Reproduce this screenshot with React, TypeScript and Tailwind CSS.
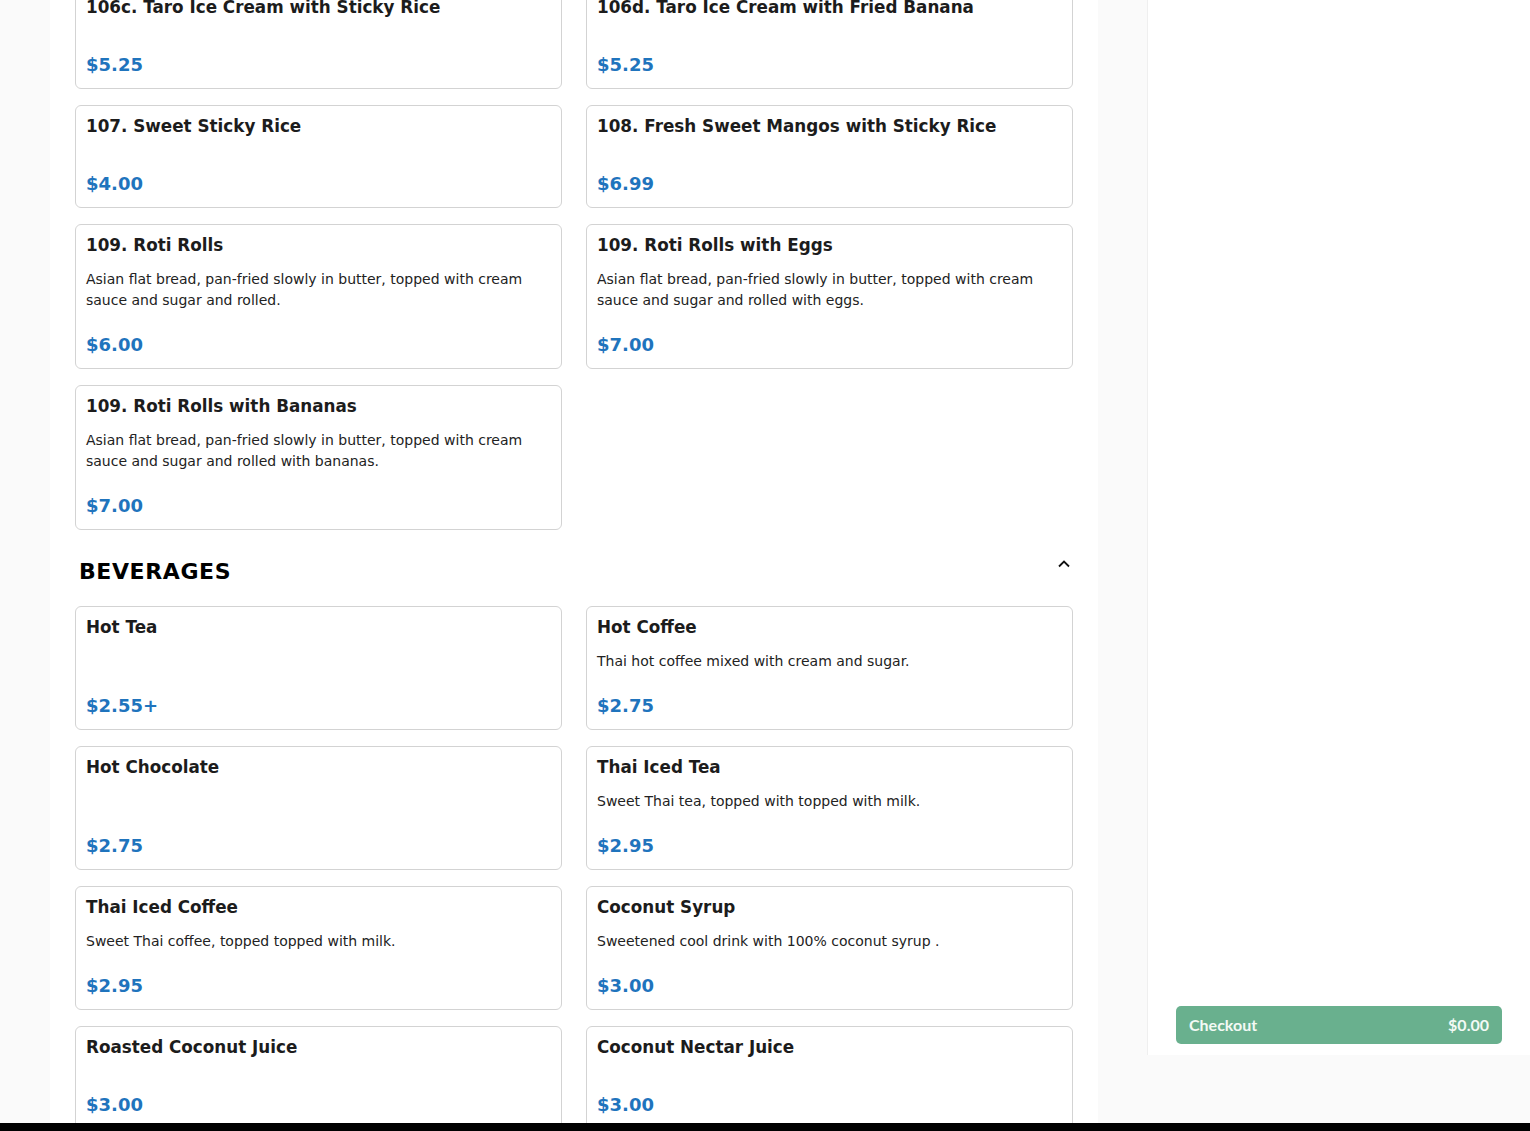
import React from "react";

type Item = { name: string; desc?: string; price: string };

const desserts: Item[] = [
  { name: "106c. Taro Ice Cream with Sticky Rice", price: "$5.25" },
  { name: "106d. Taro Ice Cream with Fried Banana", price: "$5.25" },
  { name: "107. Sweet Sticky Rice", price: "$4.00" },
  { name: "108. Fresh Sweet Mangos with Sticky Rice", price: "$6.99" },
  {
    name: "109. Roti Rolls",
    desc: "Asian flat bread, pan-fried slowly in butter, topped with cream sauce and sugar and rolled.",
    price: "$6.00",
  },
  {
    name: "109. Roti Rolls with Eggs",
    desc: "Asian flat bread, pan-fried slowly in butter, topped with cream sauce and sugar and rolled with eggs.",
    price: "$7.00",
  },
  {
    name: "109. Roti Rolls with Bananas",
    desc: "Asian flat bread, pan-fried slowly in butter, topped with cream sauce and sugar and rolled with bananas.",
    price: "$7.00",
  },
];

const beverages: Item[] = [
  { name: "Hot Tea", price: "$2.55+" },
  { name: "Hot Coffee", desc: "Thai hot coffee mixed with cream and sugar.", price: "$2.75" },
  { name: "Hot Chocolate", price: "$2.75" },
  { name: "Thai Iced Tea", desc: "Sweet Thai tea, topped with topped with milk.", price: "$2.95" },
  { name: "Thai Iced Coffee", desc: "Sweet Thai coffee, topped topped with milk.", price: "$2.95" },
  { name: "Coconut Syrup", desc: "Sweetened cool drink with 100% coconut syrup .", price: "$3.00" },
  { name: "Roasted Coconut Juice", price: "$3.00" },
  { name: "Coconut Nectar Juice", price: "$3.00" },
];

function MenuCard({ item }: { item: Item }) {
  return (
    <div className="flex flex-col rounded-[6px] border border-[#d3d3d3] bg-white px-[10px] pt-[10px] pb-[13px]">
      <div className="mb-[13px] text-[16.8px] font-bold leading-[21px] text-[#1c1c1c]">{item.name}</div>
      <div className="mb-[23px] text-[14px] leading-[21px] text-[#222222]">{item.desc}</div>
      <div className="mt-auto text-[18px] font-bold leading-[21px] text-[#1f74bd]">{item.price}</div>
    </div>
  );
}

function Grid({ items }: { items: Item[] }) {
  return (
    <div className="grid grid-cols-2 gap-x-[24px] gap-y-[16px]">
      {items.map((it) => (
        <MenuCard key={it.name} item={it} />
      ))}
    </div>
  );
}

export default function App() {
  return (
    <div
      className="flex h-[1131px] w-[1530px] flex-col overflow-hidden bg-[#fafafa]"
      style={{ fontFamily: '"DejaVu Sans", sans-serif' }}
    >
      <div className="flex h-[1123px] overflow-hidden">
        {/* menu column */}
        <main className="ml-[50px] w-[1048px] shrink-0 bg-white px-[25px]">
          <div className="mt-[-14px]">
            <Grid items={desserts} />
            <div className="flex items-start justify-between pl-[4px] pr-[2px] pt-[27px] pb-[19px]">
              <h2 className="text-[22px] font-bold leading-[30px] tracking-[0.6px] text-black">BEVERAGES</h2>
              <svg width="14" height="10" viewBox="0 0 14 10" className="mt-[2px]">
                <polyline points="2,7.5 7,2.5 12,7.5" fill="none" stroke="#111" strokeWidth="1.8" />
              </svg>
            </div>
            <Grid items={beverages} />
          </div>
        </main>

        {/* order panel */}
        <aside className="ml-[49px] flex h-[1055px] w-[383px] shrink-0 flex-col justify-end border-l border-[#efefef] bg-white pb-[11px] pl-[28px] pr-[28px]">
          <button
            className="flex h-[38px] items-center justify-between rounded-[5px] bg-[#69b08e] px-[13px] text-[16px] font-bold text-[#f3faf5]"
            style={{ fontFamily: 'Lato, sans-serif' }}
          >
            <span>Checkout</span>
            <span>$0.00</span>
          </button>
        </aside>
      </div>
      <div className="h-[8px] bg-black" />
    </div>
  );
}
